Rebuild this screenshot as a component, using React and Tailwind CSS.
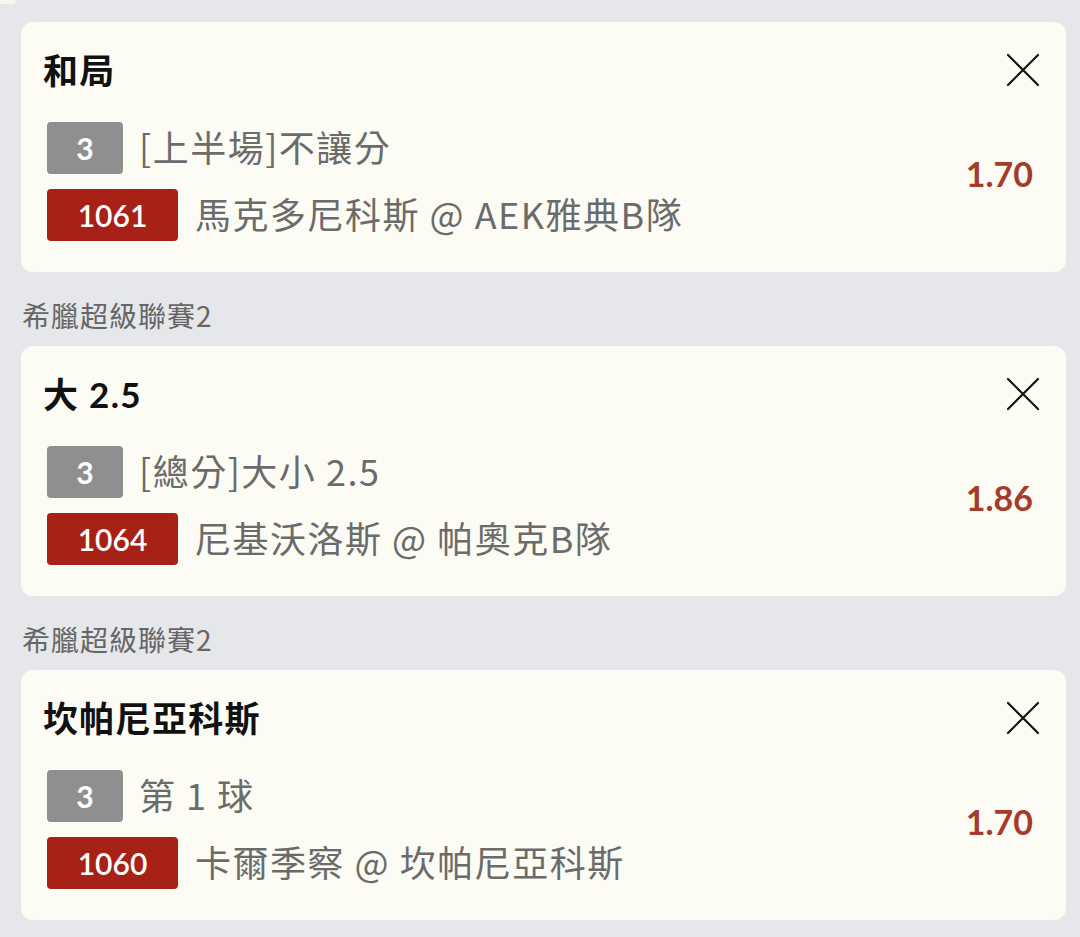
import React from "react";

const bets = [
  {
    league: null,
    title: "和局",
    type: "[上半場]不讓分",
    code: "1061",
    match: "馬克多尼科斯 @ AEK雅典B隊",
    odds: "1.70",
  },
  {
    league: "希臘超級聯賽2",
    title: "大 2.5",
    type: "[總分]大小 2.5",
    code: "1064",
    match: "尼基沃洛斯 @ 帕奧克B隊",
    odds: "1.86",
  },
  {
    league: "希臘超級聯賽2",
    title: "坎帕尼亞科斯",
    type: "第 1 球",
    code: "1060",
    match: "卡爾季察 @ 坎帕尼亞科斯",
    odds: "1.70",
  },
];

function CloseIcon() {
  return (
    <svg width="34" height="34" viewBox="0 0 34 34" fill="none" stroke="#111" strokeWidth="2.2" strokeLinecap="round">
      <path d="M2 2 L32 32 M32 2 L2 32" />
    </svg>
  );
}

function Card({ bet }) {
  return (
    <div className="ml-[21px] mr-[14px] rounded-[12px] bg-[#fcfcf4] h-[250px] flex flex-col">
      <div className="flex items-center justify-between pl-[22px] pr-[26px] pt-[16px] h-[80px]">
        <div className="text-[35px] leading-[40px] font-bold text-[#111] tracking-[1.3px] [font-family:Lato,'Noto_Sans_CJK_TC',sans-serif]">
          {bet.title}
        </div>
        <CloseIcon />
      </div>
      <div className="flex items-center justify-between pl-[26px] pr-[33px] mt-[20px]">
        <div className="flex flex-col gap-[15px]">
          <div className="flex items-center gap-[16px]">
            <div className="w-[76px] h-[52px] rounded-[4px] bg-[#8f8f8f] flex items-center justify-center text-white text-[30px] font-bold [font-family:Lato,sans-serif]">
              3
            </div>
            <div className="pb-[4px] text-[36px] leading-none text-[#6b6b6b] tracking-[1.5px] [font-family:'Noto_Sans_CJK_TC',sans-serif]">
              {bet.type}
            </div>
          </div>
          <div className="flex items-center gap-[17px]">
            <div className="w-[131px] h-[52px] rounded-[4px] bg-[#a82117] flex items-center justify-center text-white text-[30px] font-semibold [font-family:Lato,sans-serif]">
              {bet.code}
            </div>
            <div className="pb-[4px] text-[36px] leading-none text-[#6b6b6b] tracking-[1.5px] [font-family:'Noto_Sans_CJK_TC',sans-serif]">
              {bet.match}
            </div>
          </div>
        </div>
        <div className="pb-[16px] text-[34px] font-bold text-[#a63a2b] [font-family:Lato,sans-serif]">
          {bet.odds}
        </div>
      </div>
    </div>
  );
}

export default function App() {
  return (
    <div className="w-[1080px] h-[937px] bg-[#e6e7ea] overflow-hidden">
      <div className="h-[4px] w-[16px] bg-[#f7f7f2] rounded-br-[14px]" />
      <div className="h-[18px]" />
      {bets.map((bet, i) => (
        <div key={i}>
          {bet.league && (
            <div className="h-[74px] pl-[22px] pt-[29px] text-[28px] leading-[28px] text-[#666] tracking-[1px] [font-family:'Noto_Sans_CJK_TC',sans-serif]">
              {bet.league}
            </div>
          )}
          <Card bet={bet} />
        </div>
      ))}
    </div>
  );
}
